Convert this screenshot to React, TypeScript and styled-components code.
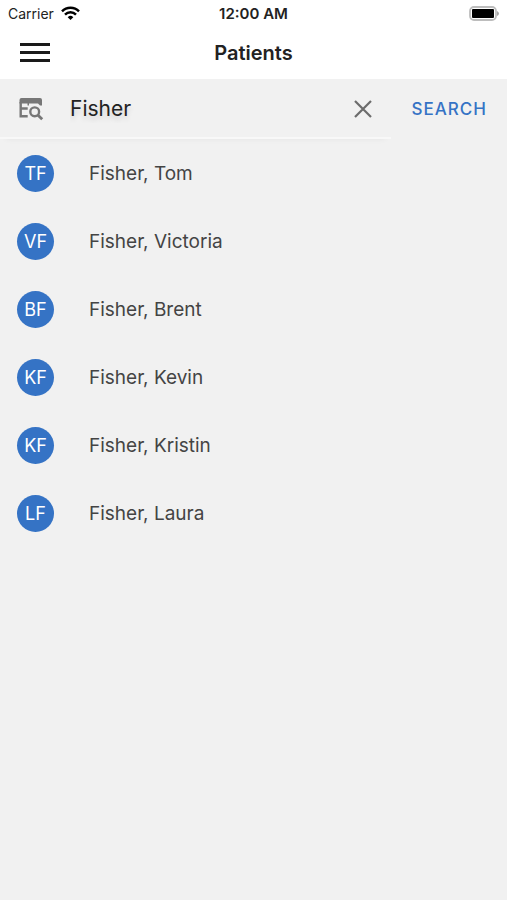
import React, { useState } from "react";
import styled, { createGlobalStyle } from "styled-components";

const GlobalStyle = createGlobalStyle`
  *, *::before, *::after { box-sizing: border-box; }
  body {
    margin: 0;
    background: #f1f1f1;
    font-family: Inter, "Liberation Sans", sans-serif;
    color: #222;
  }
  button, input { font: inherit; color: inherit; }
`;

const Screen = styled.div`
  min-height: 100vh;
  display: flex;
  flex-direction: column;
`;

const StatusBar = styled.div`
  display: grid;
  grid-template-columns: 1fr auto 1fr;
  align-items: center;
  height: 27px;
  padding: 0 8px;
  background: #fff;
  font-size: 14px;
  line-height: 20px;
`;

const Carrier = styled.div`
  display: flex;
  align-items: center;
  gap: 7px;
`;

const Clock = styled.time`
  font-size: 15px;
  font-weight: 600;
`;

const Battery = styled.svg`
  justify-self: end;
`;

const Header = styled.header`
  display: grid;
  grid-template-columns: 1fr auto 1fr;
  align-items: center;
  height: 52px;
  padding: 0 20px;
  background: #fff;
`;

const Title = styled.h1`
  margin: 0;
  font-size: 20px;
  line-height: 24px;
  font-weight: 600;
`;

const IconButton = styled.button`
  display: flex;
  justify-self: start;
  padding: 0;
  border: 0;
  background: none;
  cursor: pointer;
`;

const SearchForm = styled.form`
  display: flex;
  align-items: stretch;
  height: 60px;
`;

const SearchField = styled.div`
  flex: 1;
  min-width: 0;
  display: flex;
  align-items: center;
  gap: 26px;
  padding: 2px 19px 0 18px;
  border-bottom: 2px solid #f8f8f8;
  box-shadow: 0 6px 6px -6px rgba(0, 0, 0, 0.06);
`;

const SearchInput = styled.input`
  flex: 1;
  min-width: 0;
  padding: 0;
  border: 0;
  outline: 0;
  background: none;
  font-size: 21px;
  line-height: 28px;
  text-shadow: 0 4px 5px rgba(0, 0, 0, 0.12);
`;

const SearchButton = styled.button`
  padding: 0 20px 0 21px;
  border: 0;
  background: none;
  color: #3573c5;
  font-size: 17px;
  font-weight: 500;
  letter-spacing: 1px;
  cursor: pointer;
`;

const PatientList = styled.ul`
  margin: 0;
  padding: 0;
  list-style: none;
`;

const PatientRow = styled.li`
  display: flex;
  align-items: center;
  gap: 35px;
  height: 68px;
  padding: 0 17px;
`;

const Avatar = styled.span`
  display: flex;
  align-items: center;
  justify-content: center;
  width: 37px;
  height: 37px;
  border-radius: 50%;
  background: #3573c5;
  color: #fff;
  font-size: 18px;
`;

const PatientName = styled.span`
  padding-top: 2px;
  color: #444;
  font-size: 19px;
  line-height: 24px;
`;

const patients = [
  { initials: "TF", name: "Fisher, Tom" },
  { initials: "VF", name: "Fisher, Victoria" },
  { initials: "BF", name: "Fisher, Brent" },
  { initials: "KF", name: "Fisher, Kevin" },
  { initials: "KF", name: "Fisher, Kristin" },
  { initials: "LF", name: "Fisher, Laura" },
];

const WifiIcon = () => (
  <svg width="19" height="16" viewBox="0 0 19 16" fill="none" stroke="#000" strokeWidth="2.5" aria-hidden="true">
    <path d="M1 5.3a12 12 0 0 1 17 0" />
    <path d="M4 8.6a7.8 7.8 0 0 1 11 0" />
    <path d="M6.7 11.2a4 4 0 0 1 5.6 0L9.5 14z" fill="#000" stroke="none" />
  </svg>
);

const BatteryIcon = () => (
  <Battery width="30" height="15" viewBox="0 0 30 15" aria-hidden="true">
    <rect x="1" y="1" width="26" height="13" rx="4" fill="#fff" stroke="#bdbdbd" strokeWidth="1.8" />
    <rect x="3" y="3" width="22" height="9" rx="1" fill="#000" />
    <path d="M28 5q2 1 2 2.500t-2 2.500z" fill="#a5a5a5" />
  </Battery>
);

const MenuIcon = () => (
  <svg width="30" height="22" viewBox="0 0 30 22" fill="#1a1a1a" aria-hidden="true">
    <path d="M0 1h30v3H0zM0 9h30v3H0zM0 17h30v3H0z" />
  </svg>
);

const TableSearchIcon = () => (
  <svg width="26" height="26" viewBox="0 0 26 26" fill="none" stroke="#777" strokeWidth="2.400" aria-hidden="true">
    <path d="M1.500 4a2 2 0 0 1 2-2h18.500a2 2 0 0 1 2 2v5.500h-2l-2-2h-9v2h-1.500v-2H1.500z" fill="#777" stroke="none" />
    <path d="M2.700 6v14.300h7M2.700 12.500h7" />
    <circle cx="16.700" cy="15.800" r="4.400" />
    <path d="M19.800 18.900l4.400 4.400" strokeWidth="2.800" />
  </svg>
);

const CloseIcon = () => (
  <svg width="18" height="18" viewBox="0 0 18 18" fill="none" stroke="#6c6c6c" strokeWidth="2.200" aria-hidden="true">
    <path d="M1 1l16 16M17 1L1 17" />
  </svg>
);

export default function App() {
  const [query, setQuery] = useState("Fisher");

  return (
    <>
      <GlobalStyle />
      <Screen>
        <StatusBar>
          <Carrier>
            Carrier
            <WifiIcon />
          </Carrier>
          <Clock>12:00 AM</Clock>
          <BatteryIcon />
        </StatusBar>
        <Header>
          <IconButton type="button" aria-label="Menu">
            <MenuIcon />
          </IconButton>
          <Title>Patients</Title>
        </Header>
        <main>
          <SearchForm onSubmit={(event) => event.preventDefault()}>
            <SearchField>
              <TableSearchIcon />
              <SearchInput
                type="text"
                aria-label="Patient name"
                value={query}
                onChange={(event) => setQuery(event.target.value)}
              />
              <IconButton type="button" aria-label="Clear" onClick={() => setQuery("")}>
                <CloseIcon />
              </IconButton>
            </SearchField>
            <SearchButton type="submit">SEARCH</SearchButton>
          </SearchForm>
          <PatientList>
            {patients.map((patient, index) => (
              <PatientRow key={index}>
                <Avatar>{patient.initials}</Avatar>
                <PatientName>{patient.name}</PatientName>
              </PatientRow>
            ))}
          </PatientList>
        </main>
      </Screen>
    </>
  );
}
